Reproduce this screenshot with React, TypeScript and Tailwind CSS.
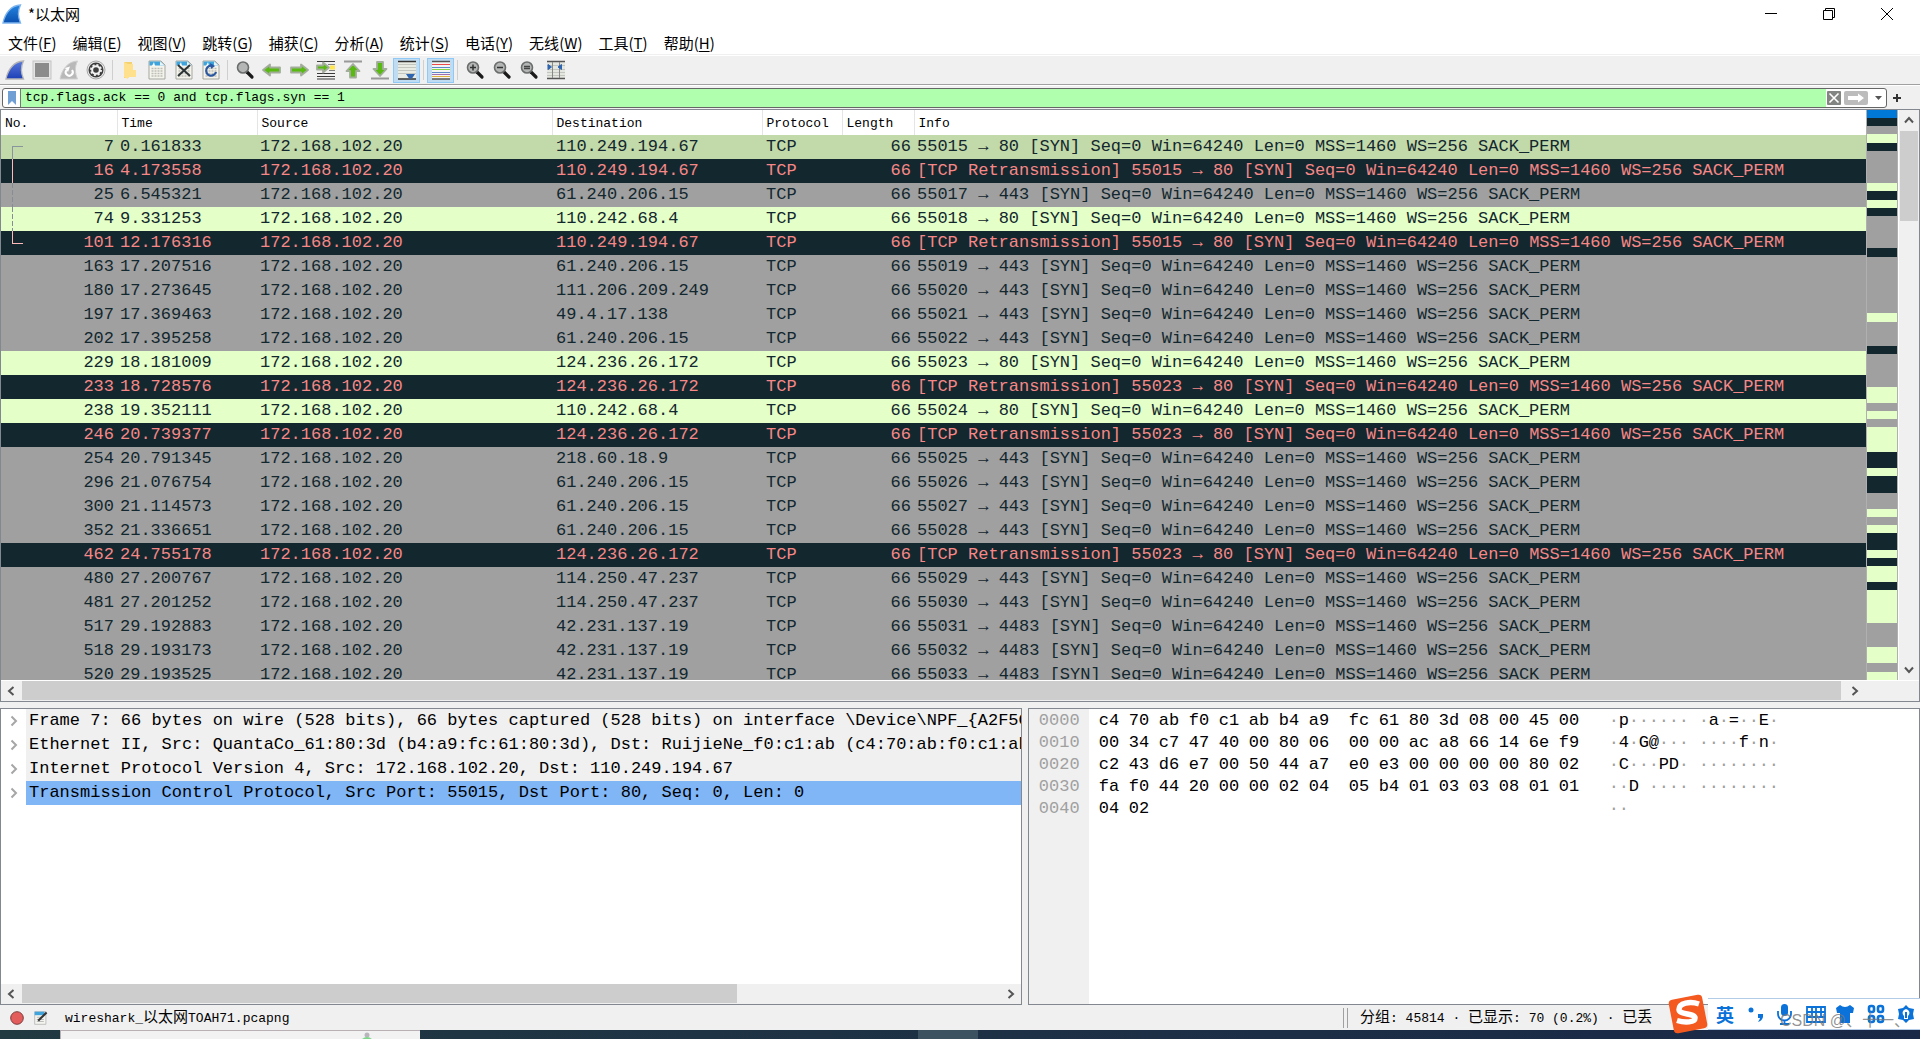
import { ReactNode } from 'react';
import clsx from 'clsx';

type Kind = 'selected' | 'bad' | 'syn' | 'http';

const rowStyles: Record<Kind, string> = {
  selected: 'bg-[#c2d9a9] text-[#12272e]',
  bad: 'bg-[#12272e] text-[#f78787]',
  syn: 'bg-[#a0a0a0] text-[#12272e]',
  http: 'bg-[#e4ffc7] text-[#12272e]',
};

// no, time, destination, source port, destination port, kind
const packets: [number, string, string, number, number, Kind][] = [
  [7, '0.161833', '110.249.194.67', 55015, 80, 'selected'],
  [16, '4.173558', '110.249.194.67', 55015, 80, 'bad'],
  [25, '6.545321', '61.240.206.15', 55017, 443, 'syn'],
  [74, '9.331253', '110.242.68.4', 55018, 80, 'http'],
  [101, '12.176316', '110.249.194.67', 55015, 80, 'bad'],
  [163, '17.207516', '61.240.206.15', 55019, 443, 'syn'],
  [180, '17.273645', '111.206.209.249', 55020, 443, 'syn'],
  [197, '17.369463', '49.4.17.138', 55021, 443, 'syn'],
  [202, '17.395258', '61.240.206.15', 55022, 443, 'syn'],
  [229, '18.181009', '124.236.26.172', 55023, 80, 'http'],
  [233, '18.728576', '124.236.26.172', 55023, 80, 'bad'],
  [238, '19.352111', '110.242.68.4', 55024, 80, 'http'],
  [246, '20.739377', '124.236.26.172', 55023, 80, 'bad'],
  [254, '20.791345', '218.60.18.9', 55025, 443, 'syn'],
  [296, '21.076754', '61.240.206.15', 55026, 443, 'syn'],
  [300, '21.114573', '61.240.206.15', 55027, 443, 'syn'],
  [352, '21.336651', '61.240.206.15', 55028, 443, 'syn'],
  [462, '24.755178', '124.236.26.172', 55023, 80, 'bad'],
  [480, '27.200767', '114.250.47.237', 55029, 443, 'syn'],
  [481, '27.201252', '114.250.47.237', 55030, 443, 'syn'],
  [517, '29.192883', '42.231.137.19', 55031, 4483, 'syn'],
  [518, '29.193173', '42.231.137.19', 55032, 4483, 'syn'],
  [520, '29.193525', '42.231.137.19', 55033, 4483, 'syn'],
];

const mapColors: Record<string, string> = {
  b: 'bg-[#0078d7]',
  d: 'bg-[#12272e]',
  g: 'bg-[#a0a0a0]',
  l: 'bg-[#e4ffc7]',
};

// colour and number of packets for each band of the minimap
const minimap =
  'b1 d1 g1 l1 d1 g4 l1 d1 l1 d1 g4 d1 g7 l1 g3 d1 g4 l2 g1 l1 g1 l3 d2 l1 d2 g2 l1 g1 l1 d2 l1 d1 l2 d1 l4 g3 l2 g1 l1'.split(' ');

const menus: [string, string][] = [
  ['文件', 'F'],
  ['编辑', 'E'],
  ['视图', 'V'],
  ['跳转', 'G'],
  ['捕获', 'C'],
  ['分析', 'A'],
  ['统计', 'S'],
  ['电话', 'Y'],
  ['无线', 'W'],
  ['工具', 'T'],
  ['帮助', 'H'],
];

const tree = [
  'Frame 7: 66 bytes on wire (528 bits), 66 bytes captured (528 bits) on interface \\Device\\NPF_{A2F5CA',
  'Ethernet II, Src: QuantaCo_61:80:3d (b4:a9:fc:61:80:3d), Dst: RuijieNe_f0:c1:ab (c4:70:ab:f0:c1:ab)',
  'Internet Protocol Version 4, Src: 172.168.102.20, Dst: 110.249.194.67',
  'Transmission Control Protocol, Src Port: 55015, Dst Port: 80, Seq: 0, Len: 0',
];

const dump = [
  'c4 70 ab f0 c1 ab b4 a9 fc 61 80 3d 08 00 45 00',
  '00 34 c7 47 40 00 80 06 00 00 ac a8 66 14 6e f9',
  'c2 43 d6 e7 00 50 44 a7 e0 e3 00 00 00 00 80 02',
  'fa f0 44 20 00 00 02 04 05 b4 01 03 03 08 01 01',
  '04 02',
].map((line) => line.split(' '));

function toAscii(byte: string) {
  const code = parseInt(byte, 16);
  return code >= 0x20 && code < 0x7f ? String.fromCharCode(code) : '·';
}

function Icon({ children, size = 20 }: { children: ReactNode; size?: number }) {
  return (
    <svg width={size} height={size} viewBox="0 0 20 20" fill="none" aria-hidden="true">
      {children}
    </svg>
  );
}

function Fin({ from, to, edge }: { from: string; to: string; edge: string }) {
  const id = `fin-${from.slice(1)}`;
  return (
    <Icon>
      <defs>
        <linearGradient id={id} x1="0" y1="0" x2="0" y2="1">
          <stop offset="0" stopColor={from} />
          <stop offset="1" stopColor={to} />
        </linearGradient>
      </defs>
      <path d="M1 19C3 9 9 1.500 18.500 1C15.500 7 16 13 18.500 19Z" fill={`url(#${id})`} stroke={edge} strokeWidth="1.300" />
    </Icon>
  );
}

function Page({ children }: { children?: ReactNode }) {
  return (
    <Icon>
      <path d="M2 1H14L18 5V19H2Z" fill="#f4f4ec" stroke="#a5a79f" />
      <path d="M2.500 1.500H13.500L17.500 5.500H2.500Z" fill="#3fa3dc" />
      <path d="M7 2L8 6H5Z" fill="#fff" />
      <path d="M13 1.500V5.500H17.500Z" fill="#e8f4fb" />
      <path d="M4.500 8.500H15.500M4.500 11H15.500M4.500 13.500H15.500M4.500 16H15.500" stroke="#bcbeb5" strokeDasharray="2 1" strokeWidth="1.500" />
      {children}
    </Icon>
  );
}

function Arrow({ d, children }: { d: string; children?: ReactNode }) {
  return (
    <Icon>
      {children}
      <path d={d} fill="#58ba10" stroke="#a3ad9c" strokeWidth="1.800" strokeLinejoin="round" />
    </Icon>
  );
}

function Lens({ children }: { children?: ReactNode }) {
  return (
    <Icon>
      <path d="M12 12L17 17" stroke="#1a1a1a" strokeWidth="3.200" strokeLinecap="round" />
      <circle cx="8" cy="7.500" r="5.500" fill="#b4b6b6" stroke="#6b6d6d" strokeWidth="1.600" />
      {children}
    </Icon>
  );
}

const toolGroups: { label: string; icon: ReactNode; on?: boolean }[][] = [
  [
    { label: '开始捕获', icon: <Fin from="#5a78dd" to="#1b3fb5" edge="#b5b5b5" /> },
    {
      label: '停止捕获',
      icon: (
        <Icon>
          <rect x="1" y="1" width="18" height="18" fill="#e4e4e4" stroke="#c4c4c4" />
          <rect x="3" y="3" width="14" height="14" fill="#8b8b8b" />
        </Icon>
      ),
    },
    {
      label: '重新开始',
      icon: (
        <Icon>
          <path d="M1 19C3 9 9 1.500 18.500 1C15.500 7 16 13 18.500 19Z" fill="#b9b9b9" stroke="#d0d0d0" />
          <path d="M7.500 10A3.500 3.500 0 1 0 13 10" stroke="#fff" strokeWidth="2" />
          <path d="M11 6.500L6 8L9 12Z" fill="#fff" />
        </Icon>
      ),
    },
    {
      label: '捕获选项',
      icon: (
        <Icon>
          <circle cx="10" cy="10" r="9" fill="#e8e8e8" stroke="#a8a8a8" />
          <circle cx="10" cy="10" r="7.500" fill="#3e3e3e" />
          <circle cx="10" cy="10" r="4.800" fill="#f2f2f2" />
          <circle cx="10" cy="10" r="5" stroke="#f2f2f2" strokeWidth="2" strokeDasharray="2 1.900" />
          <circle cx="10" cy="10" r="2.800" fill="#3e3e3e" />
        </Icon>
      ),
    },
  ],
  [
    {
      label: '打开',
      icon: (
        <Icon>
          <path d="M4 2H12V14L8 18H4Z" fill="#f3d070" />
          <path d="M4 2L8 4V19L4 17ZM8 4H13V10H16V17H8Z" fill="#ffe08c" />
        </Icon>
      ),
    },
    { label: '保存', icon: <Page /> },
    { label: '关闭', icon: <Page><path d="M4 5L16 16M16 5L4 16" stroke="#2d3436" strokeWidth="2" /></Page> },
    {
      label: '重新加载',
      icon: (
        <Page>
          <path d="M12 6A5 5 0 1 0 15 12" stroke="#2a57a0" strokeWidth="2.200" />
          <path d="M9 3L14 6L10 9Z" fill="#2a57a0" />
        </Page>
      ),
    },
  ],
  [
    { label: '查找分组', icon: <Lens /> },
    { label: '前一分组', icon: <Arrow d="M1 10L8 4.500V7.500H18V12.500H8V15.500Z" /> },
    { label: '后一分组', icon: <Arrow d="M19 10L12 4.500V7.500H2V12.500H12V15.500Z" /> },
    {
      label: '转到分组',
      icon: (
        <Arrow d="M13 7.500L7 2.500V5.500H1V9.500H7V12.500Z">
          <path d="M1 1.500H19M1 13.500H19M1 16.500H19M1 19H19" stroke="#3a3a3a" />
          <path d="M12 4.500H19M13 10.500H19" stroke="#808080" />
          <path d="M14 7.500H19" stroke="#ffe650" strokeWidth="4" />
        </Arrow>
      ),
    },
    { label: '首个分组', icon: <Arrow d="M10 4L16.500 11H13V17.500H7V11H3.500Z"><path d="M1 1.500H19" stroke="#999" strokeWidth="2" /></Arrow> },
    { label: '最新分组', icon: <Arrow d="M10 16L16.500 9H13V2H7V9H3.500Z"><path d="M1 18.500H19" stroke="#999" strokeWidth="2" /></Arrow> },
    {
      label: '自动滚动',
      on: true,
      icon: (
        <Icon>
          <rect x="1" y="1" width="18" height="18" fill="#e8eae4" />
          <path d="M1 4.500H19M1 7.500H19M1 10.500H19M1 13.500H19" stroke="#c3c6bf" />
          <path d="M1 1.500H19M1 19H19" stroke="#333" strokeWidth="1.500" />
          <path d="M9 14H18L15 18.500H12Z" fill="#2e65b0" />
        </Icon>
      ),
    },
  ],
  [
    {
      label: '着色',
      on: true,
      icon: (
        <Icon>
          <rect x="1" y="1" width="18" height="18" fill="#f4f4f4" />
          <path d="M1 1.500H19M1 19H19" stroke="#555" strokeWidth="1.500" />
          <path d="M1 4.500H19" stroke="#ec4a4a" />
          <path d="M1 7.500H19" stroke="#5b89c8" />
          <path d="M1 9.500H19" stroke="#86d443" />
          <path d="M1 12.500H19" stroke="#5b89c8" />
          <path d="M1 14.500H19" stroke="#a06fb0" />
          <path d="M1 16.500H19" stroke="#ddb13c" />
        </Icon>
      ),
    },
  ],
  [
    { label: '放大', icon: <Lens><path d="M5 7.500H11M8 4.500V10.500" stroke="#333" strokeWidth="1.500" /></Lens> },
    { label: '缩小', icon: <Lens><path d="M5 7.500H11" stroke="#333" strokeWidth="1.500" /></Lens> },
    { label: '正常大小', icon: <Lens><path d="M5 6.500H11M5 8.500H11" stroke="#444" strokeWidth="1.500" /></Lens> },
    {
      label: '调整列宽',
      icon: (
        <Icon>
          <rect x="1" y="1" width="18" height="18" fill="#e4e6e0" />
          <path d="M1 5.500H19M1 9.500H19M1 12.500H19M1 15.500H19" stroke="#c3c6bf" />
          <path d="M1 1.500H19M1 18.500H19" stroke="#555" strokeWidth="1.500" />
          <path d="M6.500 2V18M13.500 2V18" stroke="#888" />
          <path d="M2 4.500V9.500L5.500 7ZM15.500 4.500V9.500L12 7Z" fill="#2e65b0" stroke="#2e65b0" />
        </Icon>
      ),
    },
  ],
];

const turns = { up: 'rotate-0', right: 'rotate-90', down: 'rotate-180', left: '-rotate-90' };

function ScrollArrow({ dir, label }: { dir: keyof typeof turns; label: string }) {
  return (
    <button aria-label={label} className="flex size-5 shrink-0 items-center justify-center">
      <svg width="12" height="12" viewBox="0 0 12 12" fill="none" className={turns[dir]}>
        <path d="M2 8.500L6 4L10 8.500" stroke="#555" strokeWidth="2" />
      </svg>
    </button>
  );
}

// line that ties the packets of one conversation together
const relations = [
  <path d="M22 11.500H11.500V24" stroke="#8a949c" />,
  <path d="M11.500 0V24" stroke="#ffb9b9" />,
  <path d="M11.500 0V24" stroke="#848e94" strokeDasharray="5 2" />,
  <path d="M11.500 0V24" stroke="#848e94" strokeDasharray="5 2" />,
  <path d="M11.500 0V12.500H22" stroke="#ffb9b9" />,
];

function PacketList() {
  return (
    <section className="flex min-h-0 flex-[592_1_0] flex-col border border-[#828790] bg-white">
      <div className="flex min-h-0 flex-1">
        <div className="min-w-0 flex-1 overflow-hidden">
          <table className="w-full table-fixed border-collapse font-['Liberation_Mono',monospace] text-[17px] leading-6 whitespace-pre">
            <colgroup>
              <col className="w-[116px]" />
              <col className="w-[140px]" />
              <col className="w-[295px]" />
              <col className="w-[210px]" />
              <col className="w-20" />
              <col className="w-[72px]" />
              <col />
            </colgroup>
            <thead>
              <tr className="h-[25px] text-left text-[13px] text-black">
                {['No.', 'Time', 'Source', 'Destination', 'Protocol', 'Length', 'Info'].map((name) => (
                  <th key={name} className="border-r border-[#e5e5e5] px-1 pt-0.5 pb-0 leading-[23px] font-normal last:border-r-0">{name}</th>
                ))}
              </tr>
            </thead>
            <tbody>
              {packets.map(([no, time, destination, from, to, kind], i) => (
                <tr key={no} className={clsx('h-6', rowStyles[kind])}>
                  <td className="p-0 pr-[3px]">
                    <div className="flex h-6 justify-between">
                      <svg width="24" height="24" fill="none" shapeRendering="crispEdges" aria-hidden="true">{relations[i]}</svg>
                      {no}
                    </div>
                  </td>
                  <td className="p-0 pl-[3px]">{time}</td>
                  <td className="p-0 pl-[3px]">172.168.102.20</td>
                  <td className="p-0 pl-1">{destination}</td>
                  <td className="p-0 pl-1">TCP</td>
                  <td className="p-0 pr-[3px] text-right">66</td>
                  <td className="overflow-hidden p-0 pl-[3px]">
                    {kind === 'bad' && '[TCP Retransmission] '}
                    {from} → {to} [SYN] Seq=0 Win=64240 Len=0 MSS=1460 WS=256 SACK_PERM
                  </td>
                </tr>
              ))}
            </tbody>
          </table>
        </div>
        <div className="flex w-8 flex-col border-x border-[#b0b0b0]">
          {minimap.map((band, i) => (
            <div key={i} className={mapColors[band[0]]} style={{ flexGrow: Number(band.slice(1)) }} />
          ))}
        </div>
        <div className="ml-px flex w-5 flex-col bg-[#f0f0f0]">
          <ScrollArrow dir="up" label="向上滚动" />
          <div className="flex flex-1 flex-col px-px pt-px">
            <div className="h-[90px] bg-[#cdcdcd]" />
          </div>
          <ScrollArrow dir="down" label="向下滚动" />
        </div>
      </div>
      <div className="mt-px flex h-5 bg-[#f0f0f0]">
        <ScrollArrow dir="left" label="向左滚动" />
        <div className="mb-px ml-px flex-1 bg-[#cdcdcd]" />
        <div className="w-[78px] pl-1">
          <ScrollArrow dir="right" label="向右滚动" />
        </div>
      </div>
    </section>
  );
}

function PacketDetails() {
  return (
    <section className="flex min-w-0 flex-[1022_1_0] flex-col border border-[#828790] bg-white">
      <ul className="min-h-0 flex-1 overflow-hidden font-['Liberation_Mono',monospace] text-[17px] leading-6 whitespace-pre text-black">
        {tree.map((line, i) => (
          <li key={line} className="flex h-6">
            <button aria-label="展开" className="flex w-[25px] shrink-0 items-center justify-center">
              <svg width="10" height="12" viewBox="0 0 10 12" fill="none">
                <path d="M2.500 1.500L7 6L2.500 10.500" stroke="#a6a6a6" strokeWidth="2" />
              </svg>
            </button>
            <span className={clsx('flex-1 overflow-hidden pl-[3px]', i === 3 ? 'bg-[#80b5f6]' : 'bg-[#f0f0f0]')}>{line}</span>
          </li>
        ))}
      </ul>
      <div className="flex h-5 bg-[#f0f0f0]">
        <ScrollArrow dir="left" label="向左滚动" />
        <div className="ml-px flex flex-1">
          <div className="mb-px w-[73%] bg-[#cdcdcd]" />
        </div>
        <ScrollArrow dir="right" label="向右滚动" />
      </div>
    </section>
  );
}

function PacketBytes() {
  return (
    <section className="flex min-w-0 flex-[892_1_0] border border-[#828790] bg-white font-['Liberation_Mono',monospace] text-[17px] leading-[22px] text-black">
      <div className="w-[60px] bg-[#f0f0f0] pt-px pl-2.5 text-[#a0a0a0]">
        {dump.map((_, i) => (
          <div key={i}>{`00${i}0`}</div>
        ))}
      </div>
      <div className="pt-px pl-2.5">
        {dump.map((bytes, i) => (
          <div key={i} className="flex h-[22px]">
            <div className="flex w-[510px]">
              {bytes.map((byte, j) => (
                <span key={j} className={clsx('w-[30px]', j === 8 && 'ml-2.5')}>{byte}</span>
              ))}
            </div>
            {bytes.map((byte, j) => {
              const char = toAscii(byte);
              return (
                <span key={j} className={clsx('w-2.5', j === 8 && 'ml-2.5', char === '·' && 'text-[#a0a0a0]')}>{char}</span>
              );
            })}
          </div>
        ))}
      </div>
    </section>
  );
}

function InputMethodBar() {
  return (
    <div className="absolute right-0 bottom-[9px] flex h-8 items-center">
      <svg width="40" height="40" viewBox="0 0 40 40" aria-hidden="true">
        <rect x="3" y="3" width="34" height="34" rx="4" fill="#f4591f" transform="rotate(-11 20 20)" />
        <path d="M31 10C22 7 11 9 11 15.500C11 21 27 19 27 24C27 28.500 17 29 9 26.500" fill="none" stroke="#fff" strokeWidth="5.500" />
      </svg>
      <div className="relative flex h-8 w-[212px] items-center border-y border-[#b4cbe8] bg-white pl-2 text-[#0a72d8]">
        <span className="w-8 font-['Noto_Sans_CJK_SC',sans-serif] text-[18px] font-bold">英</span>
        <svg width="172" height="24" viewBox="0 0 172 24" fill="currentColor" aria-hidden="true">
          <circle cx="3" cy="8" r="2.500" />
          <path d="M10 12H15V15Q14 19 10 20Q12 17 12 16H10Z" />
          <rect x="33" y="2" width="7" height="12" rx="3.500" />
          <path d="M30 9V12A6.500 6.500 0 0 0 43 12V9M36.500 18V22M32 22H41" fill="none" stroke="currentColor" strokeWidth="1.800" />
          <path d="M59 5H77V20H59ZM59 10H77M59 15H77M64 5V15M68 5V20M73 5V15" fill="none" stroke="currentColor" strokeWidth="1.800" />
          <path d="M92 3Q97 7 102 3L106 6L105 11H102V21H92V11H89L88 6Z" />
          <g fill="none" stroke="currentColor" strokeWidth="2.600">
            <rect x="121" y="4" width="5" height="6" rx="2" />
            <rect x="130" y="4" width="5" height="6" rx="2" />
            <rect x="121" y="14" width="5" height="6" rx="2" />
            <rect x="130" y="14" width="5" height="6" rx="2" />
          </g>
          <path d="M158 3L161 6L166 7L165 12L166 17L161 18L158 21L155 18L150 17L151 12L150 7L155 6Z" />
          <path d="M158 7A4 4 0 0 1 160 14V17H156V14A4 4 0 0 1 158 7Z" fill="#fff" />
          <path d="M158 10V16" stroke="currentColor" strokeWidth="2" />
        </svg>
        <span className="absolute top-3 left-[72px] font-['Liberation_Sans','Noto_Sans_CJK_SC',sans-serif] text-base leading-5 whitespace-nowrap text-[#777]/80">CSDN @、十一、</span>
      </div>
    </div>
  );
}

export default function App() {
  return (
    <div className="relative flex h-screen flex-col overflow-hidden bg-[#f0f0f0] font-['Noto_Sans_CJK_SC',sans-serif] text-[15px] text-black">
      <header className="bg-white">
        <div className="flex h-7 items-center justify-between pl-0.5 leading-7">
          <div className="flex items-center gap-1.5">
            <Fin from="#2584e0" to="#0a4fae" edge="#7db4ee" />
            <h1 className="text-[15px]">*以太网</h1>
          </div>
          <div className="flex h-7 pr-1">
            <button aria-label="最小化" className="flex w-[58px] items-center justify-center">
              <svg width="12" height="12"><path d="M0 5.500H12" stroke="#000" /></svg>
            </button>
            <button aria-label="还原" className="flex w-[58px] items-center justify-center">
              <svg width="12" height="12" fill="none" stroke="#000"><path d="M.5 2.500H9.500V11.500H.5ZM2.500 2V.5H11.500V9.500H10" /></svg>
            </button>
            <button aria-label="关闭" className="flex w-[58px] items-center justify-center">
              <svg width="12" height="12" stroke="#000"><path d="M0 0L12 12M12 0L0 12" /></svg>
            </button>
          </div>
        </div>
        <nav className="flex h-[26px] gap-4 pt-[3px] pl-2 leading-[22px]">
          {menus.map(([name, key]) => (
            <button key={key}>{name}(<u className="underline-offset-2">{key}</u>)</button>
          ))}
        </nav>
      </header>

      <div className="mt-px flex h-[30px] items-center border-t border-b border-t-white border-b-[#a0a0a0] pl-px">
        {toolGroups.map((tools, i) => (
          <div key={i} className="flex items-center">
            {i > 0 && <span className="mx-[3px] h-5 w-px bg-[#cfcfcf]" />}
            {tools.map(({ label, icon, on }) => (
              <button
                key={label}
                aria-label={label}
                className={clsx('flex h-[25px] w-[27px] items-center justify-center', on && 'border border-[#90c8f6] bg-[#c0dcf3]')}
              >
                {icon}
              </button>
            ))}
          </div>
        ))}
      </div>

      <div className="flex h-6 shrink-0 items-center border-t border-white pl-0.5">
        <div className="flex h-5 flex-1 items-center rounded-[3px] border border-[#666] bg-white">
          <button aria-label="书签" className="flex h-full w-[18px] items-center justify-center border-r border-[#777]">
            <svg width="8" height="14"><path d="M0 0H8V14L4 10L0 14Z" fill="#709fd4" /></svg>
          </button>
          <input
            aria-label="显示过滤器"
            defaultValue="tcp.flags.ack == 0 and tcp.flags.syn == 1"
            className="h-full min-w-0 flex-1 bg-[#afffaf] pl-1 font-['Liberation_Mono',monospace] text-[13px] outline-none"
          />
          <button aria-label="清除" className="ml-px">
            <svg width="14" height="14"><rect width="14" height="14" rx="1" fill="#838582" /><path d="M2.500 2.500L11.500 11.500M11.500 2.500L2.500 11.500" stroke="#fff" strokeWidth="1.600" /></svg>
          </button>
          <button aria-label="应用" className="ml-[3px]">
            <svg width="24" height="14"><rect width="24" height="14" rx="2" fill="#bcbcbc" /><path d="M4 5H14V2.500L20 7L14 11.500V9H4Z" fill="#fff" /></svg>
          </button>
          <button aria-label="历史" className="flex w-[18px] items-center justify-end pr-1">
            <svg width="7" height="4"><path d="M0 0H7L3.500 4Z" fill="#555" /></svg>
          </button>
        </div>
        <button aria-label="添加按钮" className="flex w-[33px] items-center pl-1.5">
          <svg width="8" height="8"><path d="M0 4H8M4 0V8" stroke="#333" strokeWidth="2" /></svg>
        </button>
      </div>

      <PacketList />
      <main className="mt-1.5 flex min-h-0 flex-[298_1_0] gap-1.5">
        <PacketDetails />
        <PacketBytes />
      </main>

      <footer className="flex h-[25px] shrink-0 items-center justify-between pl-2.5 font-['Liberation_Mono','Noto_Sans_CJK_SC',monospace] text-[13px]">
        <div className="flex items-center">
          <svg width="14" height="14"><circle cx="7" cy="7" r="6.300" fill="#e35d5d" stroke="#7d3c3c" /></svg>
          <span className="ml-2.5">
            <Icon size={14}>
              <path d="M1 1H17V19H1Z" fill="#f4f4f0" stroke="#aaa" />
              <path d="M1 1H15V6H1Z" fill="#3fa3dc" />
              <path d="M4 9H12M4 12H14M4 15H14" stroke="#bbb" strokeWidth="1.500" />
              <path d="M6 14L18 2" stroke="#333" strokeWidth="3" />
            </Icon>
          </span>
          <span className="ml-[17px] pt-1">wireshark_<span className="text-[15px]">以太网</span>TOAH71.pcapng</span>
        </div>
        <div className="flex w-[577px] items-center whitespace-pre">
          <span className="mr-3 h-5 w-[5px] border-x border-[#a0a0a0]" />
          <span className="pt-1"><span className="text-[15px]">分组</span>: 45814 · <span className="text-[15px]">已显示</span>: 70 (0.2%) · <span className="text-[15px]">已丢</span></span>
        </div>
      </footer>

      <div className="flex h-[9px] shrink-0 bg-linear-to-r from-[#213941] to-[#1a2848] pl-[60px]">
        <div className="flex w-[360px] justify-end border-t border-l border-[#b8b0b4] bg-[#f2f2f2] pr-12">
          <svg width="10" height="8"><circle cx="5" cy="4" r="2.500" fill="#b9b5bd" /><path d="M0 8Q5 4 10 8Z" fill="#7fd68b" /></svg>
        </div>
        <div className="ml-[498px] w-[60px] bg-[#3d5260]" />
      </div>
      <InputMethodBar />
    </div>
  );
}
